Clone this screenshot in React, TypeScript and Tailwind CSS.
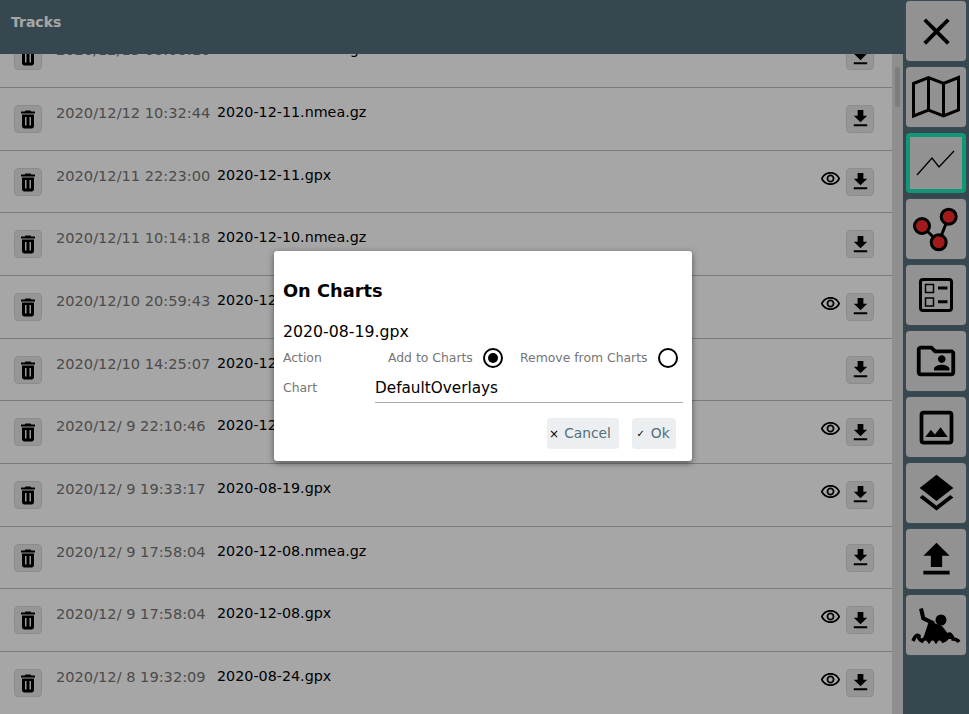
import {
  MdClose,
  MdFileDownload,
  MdFileUpload,
  MdLayers,
  MdOutlineFolderShared,
  MdOutlineImage,
  MdOutlineRemoveRedEye,
} from "react-icons/md";

const rows = [
  { date: "2020/12/13 00:00:10", name: "2020-12-12.nmea.gz" },
  { date: "2020/12/12 10:32:44", name: "2020-12-11.nmea.gz" },
  { date: "2020/12/11 22:23:00", name: "2020-12-11.gpx" },
  { date: "2020/12/11 10:14:18", name: "2020-12-10.nmea.gz" },
  { date: "2020/12/10 20:59:43", name: "2020-12-10.gpx" },
  { date: "2020/12/10 14:25:07", name: "2020-12-09.nmea.gz" },
  { date: "2020/12/ 9 22:10:46", name: "2020-12-09.gpx" },
  { date: "2020/12/ 9 19:33:17", name: "2020-08-19.gpx" },
  { date: "2020/12/ 9 17:58:04", name: "2020-12-08.nmea.gz" },
  { date: "2020/12/ 9 17:58:04", name: "2020-12-08.gpx" },
  { date: "2020/12/ 8 19:32:09", name: "2020-08-24.gpx" },
];

function TrashIcon() {
  return (
    <svg width="24" height="24" viewBox="0 0 24 24" fill="black">
      <path d="M9.500 3.500h5l.8 1H19v2H5v-2h3.700z" />
      <path
        fillRule="evenodd"
        d="M6 7.500h12V19c0 1.400-1 2.500-2.300 2.500H8.300C7 21.500 6 20.400 6 19zM9 10v8.500h1.500V10zM13.500 10v8.500H15V10z"
      />
    </svg>
  );
}

function MapIcon() {
  return (
    <svg className="shrink-0" width="60" height="60" viewBox="0 0 60 60" fill="none" stroke="black" strokeWidth="3">
      <path d="M7.500 16.500L22.500 10.500L37.500 16.500L52.500 10.500V43L37.500 49L22.500 43L7.500 49Z" />
      <path d="M22.500 10.500V43M37.500 16.500V49" />
    </svg>
  );
}

function TrackIcon() {
  return (
    <svg className="shrink-0" width="48" height="48" viewBox="0 0 48 48" fill="none" stroke="black" strokeWidth="1.300">
      <path d="M5 36L20 19L27 28L42 12" />
    </svg>
  );
}

function RouteIcon() {
  return (
    <svg className="shrink-0" width="60" height="60" viewBox="0 0 60 60" stroke="black" strokeWidth="3">
      <path d="M16 27L32.700 43.300L42.700 17.700" fill="none" />
      <circle cx="16" cy="27" r="7.500" fill="#f92a2a" />
      <circle cx="42.700" cy="17.700" r="7.500" fill="#f92a2a" />
      <circle cx="32.700" cy="43.300" r="7.500" fill="#f92a2a" />
    </svg>
  );
}

function ListIcon() {
  return (
    <svg className="shrink-0" width="60" height="60" viewBox="0 0 60 60" fill="none" stroke="black">
      <rect x="14.500" y="14.500" width="31" height="31" rx="2.500" strokeWidth="3" />
      <rect x="19.500" y="19.500" width="8" height="8" strokeWidth="1.500" />
      <rect x="19.500" y="33" width="8" height="8" strokeWidth="1.500" />
      <path d="M32 23H41.500M32 36.700H41.500" strokeWidth="3" />
    </svg>
  );
}

function SwimmerIcon() {
  return (
    <svg className="shrink-0" width="60" height="60" viewBox="0 0 60 60">
      <path d="M15 13.500L17.300 23.300L28 28.500" fill="none" stroke="black" strokeWidth="4" />
      <circle cx="35" cy="25" r="5.500" fill="black" />
      <path d="M23 26L36 31L46 44H17Z" fill="black" />
      <path
        d="M7 46C9 41 11 39 13 41C12 43 14 45 16 46C18 43 21 43 23 46C25 43 28 43 30 46C32 43 35 43 37 46C40 45 43 42 42 40C44 38 46 40 47 44C49 44 51 44 53 47"
        fill="none"
        stroke="black"
        strokeWidth="3.500"
      />
    </svg>
  );
}

function SideButton({ active, children }: { active?: boolean; children: React.ReactNode }) {
  return (
    <div
      className={
        active
          ? "w-[60px] h-[60px] flex items-center justify-center rounded-[4px] bg-[#e0e0e0] border-[4px] border-[#1de9b6]"
          : "w-[60px] h-[60px] flex items-center justify-center rounded-[4px] bg-[#e0e0e0] shadow-[0_0_1px_#9e9e9e]"
      }
    >
      {children}
    </div>
  );
}

function RowButton({ children }: { children: React.ReactNode }) {
  return (
    <div className="w-7 h-7 shrink-0 flex items-center justify-center rounded-[4px] bg-[#e6e6e6] border border-[#d8d8d8]">
      {children}
    </div>
  );
}

function Radio({ on }: { on?: boolean }) {
  return (
    <div className="w-5 h-5 rounded-full border-[2.500px] border-black flex items-center justify-center">
      {on && <div className="w-[10px] h-[10px] rounded-full bg-black" />}
    </div>
  );
}

export default function App() {
  return (
    <div className="relative w-[969px] h-[714px] overflow-hidden flex bg-[#546e7a] font-['DejaVu_Sans',sans-serif]">
      <div className="w-[903px] h-full flex flex-col">
        <div className="h-[54px] shrink-0 bg-[#546e7a] text-white font-bold text-[14px] pl-[11px] pt-[12px]">
          Tracks
        </div>
        <div className="flex-1 flex min-h-0 bg-white">
          <div className="w-[892px] overflow-hidden">
            <div className="-mt-[28.700px]">
              {rows.map((r) => (
                <div
                  key={r.date + r.name}
                  className="h-[62.67px] flex items-start pl-[14px] border-b border-[#bdbdbd]"
                >
                  <div className="mt-[17px]">
                    <RowButton>
                      <TrashIcon />
                    </RowButton>
                  </div>
                  <div className="ml-[14px] mt-[14px] w-[161px] whitespace-pre text-[14.6px] text-[#757575]">
                    {r.date}
                  </div>
                  <div className="mt-[14px] flex-1 text-[14.3px] text-black">{r.name}</div>
                  <div className="mt-[17px] mr-[18px] flex items-start gap-[5px]">
                    {r.name.endsWith(".gpx") && <MdOutlineRemoveRedEye size={21} color="black" />}
                    <RowButton>
                      <MdFileDownload size={23} color="black" />
                    </RowButton>
                  </div>
                </div>
              ))}
            </div>
          </div>
          <div className="w-[11px] bg-[#dcdcdc]">
            <div className="mt-[13px] mx-[3px] h-[40px] rounded-[3px] bg-[#c0c0c0]" />
          </div>
        </div>
      </div>
      <div className="w-[66px] flex flex-col gap-[6px] pt-[1px] pl-[3px]">
        <SideButton>
          <MdClose size={45} color="black" />
        </SideButton>
        <SideButton>
          <MapIcon />
        </SideButton>
        <SideButton active>
          <TrackIcon />
        </SideButton>
        <SideButton>
          <RouteIcon />
        </SideButton>
        <SideButton>
          <ListIcon />
        </SideButton>
        <SideButton>
          <MdOutlineFolderShared size={46} color="black" />
        </SideButton>
        <SideButton>
          <MdOutlineImage size={45} color="black" />
        </SideButton>
        <SideButton>
          <MdLayers size={45} color="black" />
        </SideButton>
        <SideButton>
          <MdFileUpload size={45} color="black" />
        </SideButton>
        <SideButton>
          <SwimmerIcon />
        </SideButton>
      </div>

      <div className="absolute inset-0 bg-black/35 flex items-center justify-center">
        <div className="w-[418px] h-[210px] -mt-[2px] -ml-[3px] bg-white rounded-[3px] shadow-[0_2px_6px_rgba(0,0,0,0.5)] px-[9px] pt-[29px]">
          <div className="font-bold text-[17.800px] leading-[22px] text-black">On Charts</div>
          <div className="mt-[20px] text-[15.750px] leading-[20px] text-black">2020-08-19.gpx</div>
          <div className="mt-[4px] h-[24px] flex items-center text-[12.400px] text-[#757575]">
            <div className="w-[105px]">Action</div>
            <div className="w-[95px]">Add to Charts</div>
            <Radio on />
            <div className="ml-[17px] w-[138px]">Remove from Charts</div>
            <Radio />
          </div>
          <div className="mt-[4px] flex items-center">
            <div className="w-[92px] text-[12.400px] text-[#757575]">Chart</div>
            <div className="flex-1 h-[29px] border-b border-[#aaaaaa] text-[15.250px] leading-[28px] text-black">
              DefaultOverlays
            </div>
          </div>
          <div className="mt-[15px] mr-[7px] flex justify-end gap-[13px]">
            <div className="h-[31px] w-[72px] pr-[6px] flex items-center justify-center gap-[5px] rounded-[4px] bg-[#eceff1] text-[13.800px] text-[#546e7a]">
              <span className="text-[12px] text-black">×</span>
              Cancel
            </div>
            <div className="h-[31px] w-[44px] pr-[2px] flex items-center justify-center gap-[6px] rounded-[4px] bg-[#eceff1] text-[13.800px] text-[#546e7a]">
              <span className="text-[10px] text-black">✓</span>
              Ok
            </div>
          </div>
        </div>
      </div>
    </div>
  );
}
